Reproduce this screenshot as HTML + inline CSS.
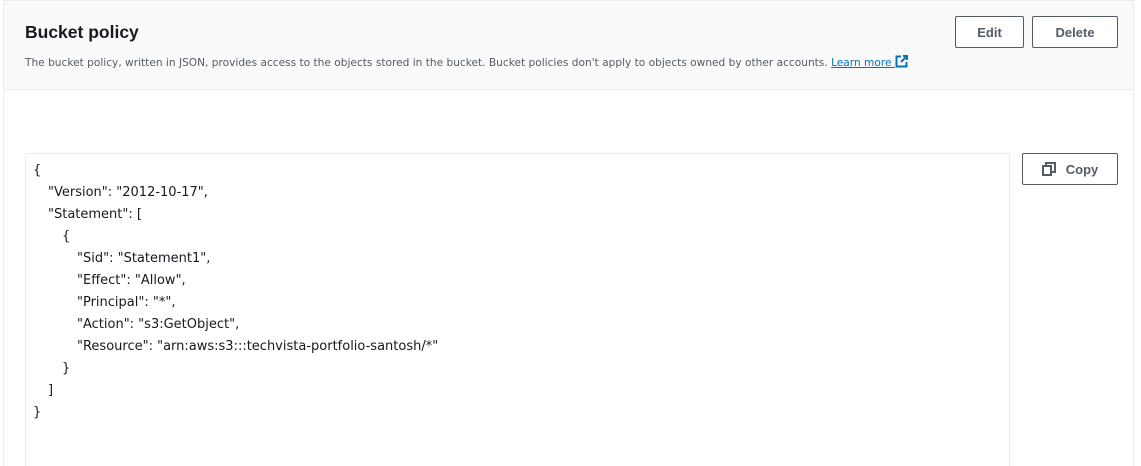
<!DOCTYPE html>
<html><head><meta charset="utf-8"><style>
html,body{margin:0;width:1141px;height:466px;overflow:hidden}
body{background:#fff;font-family:"Liberation Sans",sans-serif;position:relative}
.panel{position:absolute;left:3px;top:0;width:1131px;height:466px;border:1px solid #e9ebed;border-bottom:none;box-sizing:border-box}
.head{position:absolute;left:0;top:0;right:0;height:88px;background:#fafafa;border-bottom:1px solid #e9ebed}
h1{position:absolute;left:21px;top:21px;margin:0;font-size:17.5px;font-weight:bold;color:#16191f}
.desc{position:absolute;left:21px;top:54px;font-family:"DejaVu Sans",sans-serif;font-size:10.6px;color:#545b64;white-space:nowrap}
.desc a{color:#0073bb;text-decoration:underline}
.btn{position:absolute;border:1px solid #545b64;border-radius:2px;background:#fff;color:#545b64;font-weight:bold;font-size:13px;display:flex;align-items:center;justify-content:center;box-sizing:border-box;height:32px}
.code{position:absolute;left:25px;top:153px;width:985px;height:330px;border:1px solid #e9ebed;box-sizing:border-box}
.json{position:absolute;left:33px;top:160px;font-family:"DejaVu Sans",sans-serif;font-size:13px;line-height:22px;color:#16191f;white-space:pre}
.i1{padding-left:15px}.i2{padding-left:29px}.i3{padding-left:44px}
</style></head><body>
<div class="panel"><div class="head">
<h1>Bucket policy</h1>
<div class="desc">The bucket policy, written in JSON, provides access to the objects stored in the bucket. Bucket policies don't apply to objects owned by other accounts. <a>Learn more </a> <svg width="13" height="13" viewBox="0 0 13 13" style="vertical-align:-2px"><path d="M6 1.5H1.5v10h10V7" fill="none" stroke="#0073bb" stroke-width="2"/><path d="M8 1h4v4M12 1L6 7" fill="none" stroke="#0073bb" stroke-width="2"/></svg></div>
</div></div>
<div class="btn" style="left:955px;top:16px;width:69px">Edit</div>
<div class="btn" style="left:1032px;top:16px;width:86px">Delete</div>
<div class="code"></div>
<div class="btn" style="left:1022px;top:153px;width:96px"><svg width="14" height="14" viewBox="0 0 14 14" style="margin-right:10px"><rect x="1" y="4" width="8" height="9" fill="none" stroke="#545b64" stroke-width="2"/><path d="M4 4V1h9v9h-4" fill="none" stroke="#545b64" stroke-width="2"/></svg>Copy</div>
<div class="json"><div>{</div><div class="i1">"Version": "2012-10-17",</div><div class="i1">"Statement": [</div><div class="i2">{</div><div class="i3">"Sid": "Statement1",</div><div class="i3">"Effect": "Allow",</div><div class="i3">"Principal": "*",</div><div class="i3">"Action": "s3:GetObject",</div><div class="i3">"Resource": "arn:aws:s3:::techvista-portfolio-santosh/*"</div><div class="i2">}</div><div class="i1">]</div><div>}</div></div>
</body></html>
